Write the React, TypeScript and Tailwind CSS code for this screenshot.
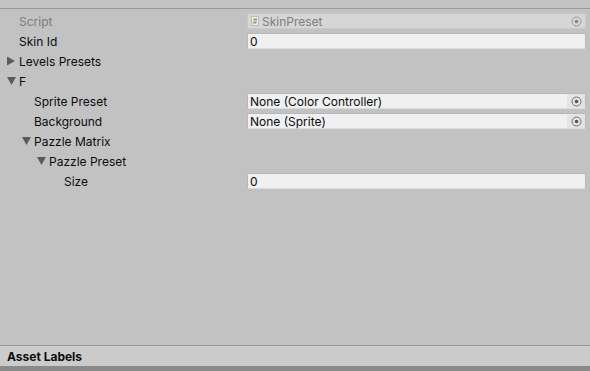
import React from "react";

const Picker = () => (
  <div className="w-[18px] h-full flex items-center justify-center bg-[#e4e4e4] rounded-r-[2px]">
    <svg width="11" height="11" viewBox="0 0 11 11">
      <circle cx="5.5" cy="5.5" r="4.5" fill="none" stroke="#6f6f6f" strokeWidth="1" />
      <circle cx="5.5" cy="5.5" r="1.8" fill="#555" />
    </svg>
  </div>
);

const TriRight = () => (
  <svg width="8" height="9" viewBox="0 0 8 9" className="shrink-0">
    <polygon points="0,0 8,4.5 0,9" fill="#5a5a5a" />
  </svg>
);
const TriDown = () => (
  <svg width="9" height="8" viewBox="0 0 9 8" className="shrink-0">
    <polygon points="0,0 9,0 4.5,8" fill="#5a5a5a" />
  </svg>
);

type RowProps = {
  label: string;
  indent: number;
  fold?: "open" | "closed";
  gray?: boolean;
  children?: React.ReactNode;
};

const Row = ({ label, indent, fold, gray, children }: RowProps) => (
  <div className="h-5 flex items-center">
    <div className="w-[247px] shrink-0 flex items-center" style={{ paddingLeft: 19 + indent * 15 }}>
      <div className="relative flex items-center">
        {fold && (
          <div className="absolute left-[-12px] top-[50%] -translate-y-1/2 flex items-center">
            {fold === "open" ? <TriDown /> : <TriRight />}
          </div>
        )}
        <span className={`leading-[16px] pt-px ${gray ? "text-[#7d7d7d]" : "text-[#0c0c0c]"}`}>{label}</span>
      </div>
    </div>
    {children && <div className="w-[339px] h-4">{children}</div>}
  </div>
);

const TextField = ({ value }: { value: string }) => (
  <div className="h-full bg-[#f0f0f0] border border-[#b8b8b8] border-b-[#dcdcdc] rounded-[2px] flex items-center pl-[2px] pt-px text-[#0c0c0c]">
    {value}
  </div>
);

const ObjectField = ({ value }: { value: string }) => (
  <div className="h-full bg-[#f0f0f0] border border-[#b8b8b8] border-b-[#dcdcdc] rounded-[2px] flex items-center text-[#0c0c0c]">
    <span className="flex-1 pl-[2px] pt-px leading-[14px] whitespace-nowrap">{value}</span>
    <Picker />
  </div>
);

export default function App() {
  return (
    <div
      className="w-[590px] h-[371px] flex flex-col bg-[#c2c2c2] text-[12px] leading-none"
      style={{ fontFamily: "Inter, 'Noto Sans', sans-serif" }}
    >
      <div className="h-[8px] bg-[#c2c2c2]" />
      <div className="h-px bg-[#999999]" />
      <div className="h-[2px]" />
      <Row label="Script" indent={0} gray>
        <div className="h-full bg-[#d6d6d6] border border-[#cacaca] rounded-[2px] flex items-center text-[#7d7d7d]">
          <div className="ml-[3px] mr-[3px] w-[8px] h-[10px] bg-[#eaeaea] border border-[#bdbdbd] flex items-center justify-center text-[7px] text-[#4c8a3c]">
            #
          </div>
          <span className="flex-1 pt-px">SkinPreset</span>
          <div className="w-[18px] h-full flex items-center justify-center">
            <svg width="11" height="11" viewBox="0 0 11 11">
              <circle cx="5.5" cy="5.5" r="4.5" fill="none" stroke="#9a9a9a" strokeWidth="1" />
              <circle cx="5.5" cy="5.5" r="1.8" fill="#8a8a8a" />
            </svg>
          </div>
        </div>
      </Row>
      <Row label="Skin Id" indent={0}>
        <TextField value="0" />
      </Row>
      <Row label="Levels Presets" indent={0} fold="closed" />
      <Row label="F" indent={0} fold="open" />
      <Row label="Sprite Preset" indent={1}>
        <ObjectField value="None (Color Controller)" />
      </Row>
      <Row label="Background" indent={1}>
        <ObjectField value="None (Sprite)" />
      </Row>
      <Row label="Pazzle Matrix" indent={1} fold="open" />
      <Row label="Pazzle Preset" indent={2} fold="open" />
      <Row label="Size" indent={3}>
        <TextField value="0" />
      </Row>
      <div className="flex-1" />
      <div className="h-px bg-[#999999]" />
      <div className="h-5 bg-[#cbcbcb] flex items-center pl-[7px] pt-px font-bold text-[#0c0c0c]">
        Asset Labels
      </div>
      <div className="h-[5px] bg-[#8a8a8a]" />
    </div>
  );
}
